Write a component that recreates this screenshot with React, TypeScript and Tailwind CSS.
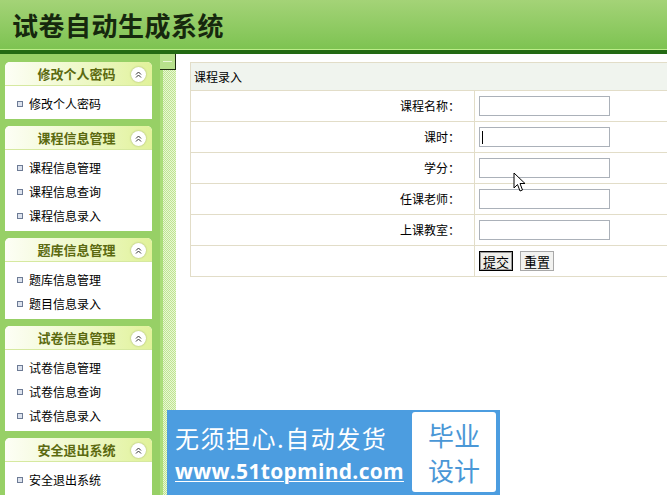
import React from "react";

const menus = [
  { title: "修改个人密码", items: ["修改个人密码"] },
  { title: "课程信息管理", items: ["课程信息管理", "课程信息查询", "课程信息录入"] },
  { title: "题库信息管理", items: ["题库信息管理", "题目信息录入"] },
  { title: "试卷信息管理", items: ["试卷信息管理", "试卷信息查询", "试卷信息录入"] },
  { title: "安全退出系统", items: ["安全退出系统"] },
];

const fields = ["课程名称：", "课时：", "学分：", "任课老师：", "上课教室："];

function CollapseIcon() {
  return (
    <span className="flex h-[15px] w-[15px] items-center justify-center rounded-full bg-white shadow-[0_0_2px_#9fae6a]">
      <svg width="7" height="7" viewBox="0 0 7 7" fill="none" stroke="#333" strokeWidth="1">
        <path d="M1 3.5 L3.5 1 L6 3.5" />
        <path d="M1 6.5 L3.5 4 L6 6.5" />
      </svg>
    </span>
  );
}

function MenuPanel({ title, items }: { title: string; items: string[] }) {
  return (
    <div className="overflow-hidden rounded-t-[5px] bg-white">
      <div className="relative flex h-[24px] items-center justify-center bg-linear-to-r from-[#fdfef6] to-[#e1f29a] pr-[4px] border-b border-[#d6e9a0]">
        <span className="text-[13px] font-bold text-[#5b6a10]">{title}</span>
        <span className="absolute right-[6px] top-[5px]">
          <CollapseIcon />
        </span>
      </div>
      <div className="pt-[6px] pb-[3px]">
        {items.map((it) => (
          <div key={it} className="flex h-[24px] items-center pl-[12px]">
            <span className="mr-[6px] h-[6px] w-[6px] border border-[#6d7b95] bg-[#dde3ee]" />
            <span className="text-[12px] text-black">{it}</span>
          </div>
        ))}
      </div>
    </div>
  );
}

export default function App() {
  return (
    <div className="relative h-[495px] w-[667px] overflow-hidden bg-white font-['Noto_Sans_CJK_SC','Noto_Sans',sans-serif]">
      <header className="flex h-[54px] flex-col">
        <div className="flex h-[49px] items-center bg-linear-to-b from-[#a4d377] to-[#7dc351] pl-[12px]">
          <h1 className="text-[26px] font-bold tracking-[0.5px] text-[#16280e]">试卷自动生成系统</h1>
        </div>
        <div className="h-px bg-[#bbec88]" />
        <div className="h-[4px] bg-[#236a13]" />
      </header>

      <div className="flex h-[441px]">
        <aside className="flex w-[160px] shrink-0 flex-col gap-[7px] bg-[#97d066] pl-[5px] pr-[8px] pt-[8px]">
          {menus.map((m) => (
            <MenuPanel key={m.title} title={m.title} items={m.items} />
          ))}
        </aside>

        <div className="w-[16px] shrink-0 border-l-[3px] border-[#a9dc78] bg-[repeating-conic-gradient(#bfe591_0_25%,#e8f7d4_0_50%)] bg-[length:2px_2px]">
          <div className="-ml-[3px] flex h-[16px] w-[16px] items-center justify-center border-b border-r border-[#1d2a12] bg-[#b7e08c]">
            <span className="h-px w-[9px] bg-[#e8f6d6]" />
          </div>
        </div>

        <main className="min-w-0 flex-1 overflow-hidden pl-[14px] pt-[8px]">
          <table className="w-[520px] border-collapse text-[12px] text-black">
            <tbody>
              <tr className="h-[28px] bg-[#f0f4ee]">
                <td colSpan={2} className="border border-[#e2ddc8] pl-[3px] align-middle">
                  课程录入
                </td>
              </tr>
              {fields.map((f, i) => (
                <tr key={f} className="h-[31px]">
                  <td className="w-[284px] border border-[#e2ddc8] pr-[14px] text-right">{f}</td>
                  <td className="border border-[#e2ddc8] pl-[4px]">
                    <div className="relative h-[20px] w-[131px] border border-[#abb1b9] bg-white">
                      {i === 1 && <span className="absolute left-[2px] top-[3px] h-[13px] w-px bg-black" />}
                    </div>
                  </td>
                </tr>
              ))}
              <tr className="h-[31px]">
                <td className="border border-[#e2ddc8]" />
                <td className="border border-[#e2ddc8] pl-[4px]">
                  <div className="flex gap-[7px]">
                    <button className="flex h-[20px] w-[34px] items-center justify-center border border-black bg-[#eeeeea] text-[13px] leading-none shadow-[inset_0_0_0_1px_#9a9a9a]">
                      提交
                    </button>
                    <button className="flex h-[20px] w-[34px] items-center justify-center border border-[#a8a8a8] bg-[#f2f2f0] text-[13px] leading-none">
                      重置
                    </button>
                  </div>
                </td>
              </tr>
            </tbody>
          </table>
        </main>
      </div>

      <svg className="absolute left-[513px] top-[172px]" width="14" height="21" viewBox="0 0 14 21">
        <path d="M1 1 L1 16 L4.5 12.5 L7 19 L9.5 18 L7 11.5 L12 11.5 Z" fill="white" stroke="black" strokeWidth="1" />
      </svg>

      <div className="absolute left-[167px] top-[410px] flex h-[85px] w-[333px] bg-[#4c9de0] pl-[8px] pt-[2px]">
        <div className="flex w-[236px] flex-col pt-[12px]">
          <span className="text-[24px] leading-[28px] tracking-[1.5px] text-white">无须担心.自动发货</span>
          <span className="mt-[6px] font-['Open_Sans',sans-serif] text-[21px] font-bold leading-[26px] tracking-[0.3px] text-white underline decoration-1 underline-offset-2">
            www.51topmind.com
          </span>
        </div>
        <div className="ml-[1px] flex h-[80px] w-[84px] flex-col items-center justify-center rounded-[3px] bg-white text-[26px] leading-[35px] text-[#4a97d6]">
          <span>毕业</span>
          <span>设计</span>
        </div>
      </div>
    </div>
  );
}
